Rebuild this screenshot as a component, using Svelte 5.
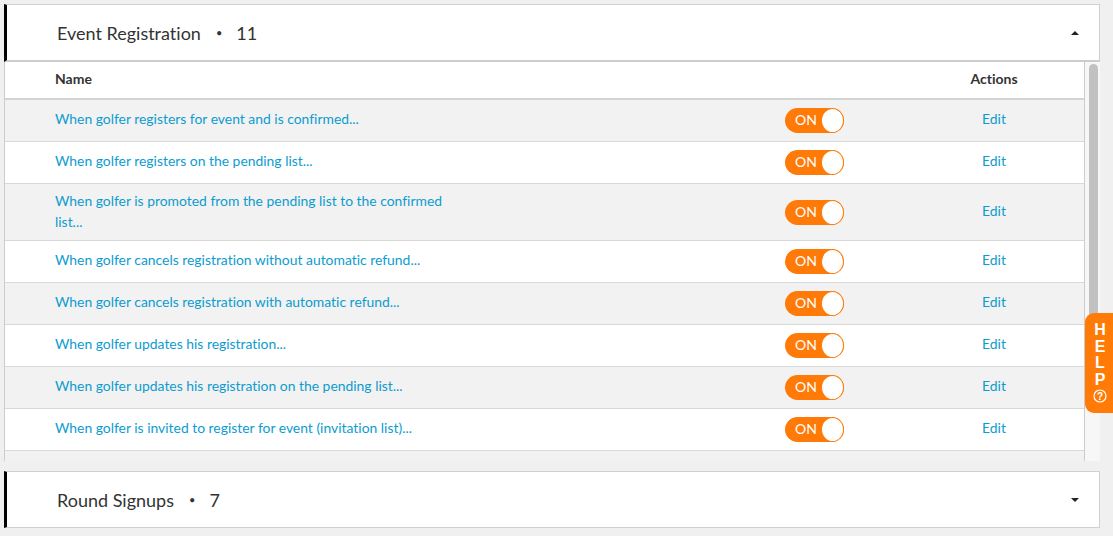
<script>
  const rows = [
    { text: 'When golfer registers for event and is confirmed...' },
    { text: 'When golfer registers on the pending list...' },
    { text: 'When golfer is promoted from the pending list to the confirmed list...', tall: true },
    { text: 'When golfer cancels registration without automatic refund...' },
    { text: 'When golfer cancels registration with automatic refund...' },
    { text: 'When golfer updates his registration...' },
    { text: 'When golfer updates his registration on the pending list...' },
    { text: 'When golfer is invited to register for event (invitation list)...' }
  ];
</script>

<div class="page">
  <section class="panel open">
    <header class="head">
      <span class="title">Event Registration</span>
      <span class="dot">•</span>
      <span class="count">11</span>
      <span class="caret up"></span>
    </header>
    <div class="scroller">
      <div class="tbl">
        <div class="row th">
          <div class="name">Name</div>
          <div></div>
          <div class="act">Actions</div>
        </div>
        {#each rows as r}
          <div class="row" class:tall={r.tall}>
            <div class="name"><a href="#top">{r.text}</a></div>
            <div class="toggle"><span class="on">ON</span><span class="knob"></span></div>
            <div class="act"><a href="#top">Edit</a></div>
          </div>
        {/each}
        <div class="filler"></div>
      </div>
      <div class="track"><div class="thumb"></div></div>
    </div>
  </section>

  <section class="panel closed">
    <header class="head">
      <span class="title">Round Signups</span>
      <span class="dot">•</span>
      <span class="count">7</span>
      <span class="caret down"></span>
    </header>
  </section>
</div>

<aside class="help">
  <span>H</span><span>E</span><span>L</span><span>P</span>
  <svg width="14" height="14" viewBox="0 0 14 14"><circle cx="7" cy="7" r="6" fill="none" stroke="#fff" stroke-width="1.2"/><text x="7" y="10.5" text-anchor="middle" font-size="10" font-weight="700" fill="#fff">?</text></svg>
</aside>

<style>
  :global(body) {
    margin: 0;
    background: #f0f0f0;
    overflow: hidden;
    font-family: Lato, "Liberation Sans", sans-serif;
    font-variant-ligatures: none;
    color: #333;
  }
  .page {
    padding: 4px 13px 0 4px;
  }
  .head {
    display: flex;
    align-items: center;
    height: 55px;
    background: #fff;
    border: 1px solid #d0d0d0;
    border-left: 3px solid #000;
    padding-left: 50px;
    padding-right: 20px;
    font-size: 18px;
    color: #333;
  }
  .open .head {
    border-bottom: 2px solid #ccc;
  }
  .dot {
    margin: 0 14px 0 15px;
    font-size: 11px;
  }
  .caret {
    margin-left: auto;
    width: 0;
    height: 0;
    border-left: 4.5px solid transparent;
    border-right: 4.5px solid transparent;
  }
  .caret.up { border-bottom: 4.5px solid #222; }
  .caret.down { border-top: 4.5px solid #222; }
  .scroller {
    display: flex;
    height: 399px;
    overflow: hidden;
  }
  .tbl {
    flex: 1;
    display: flex;
    flex-direction: column;
    border-left: 1px solid #ccc;
    border-right: 1px solid #ccc;
    background: #fff;
  }
  .track {
    flex: none;
    width: 15px;
    box-sizing: border-box;
    padding: 2px 2px 0 4px;
    background: #f7f7f7;
  }
  .thumb {
    height: 306px;
    border-radius: 5px;
    background: #c1c1c1;
  }
  .row {
    flex: none;
    display: grid;
    grid-template-columns: 780px 59px 1fr;
    align-items: center;
    min-height: 41px;
    border-bottom: 1px solid #d8d8d8;
    font-size: 13.9px;
    line-height: 21px;
  }
  .row:nth-child(even) {
    background: #f2f2f2;
  }
  .row.th {
    min-height: 36px;
    border-bottom: 2px solid #d4d4d4;
    background: #fff;
    font-weight: 700;
    font-size: 14px;
    color: #333;
  }
  .filler {
    flex: 1;
    background: #f2f2f2;
  }
  .name {
    padding: 5px 320px 9px 50px;
  }
  .tall .name {
    padding-top: 6px;
    padding-bottom: 8px;
  }
  .th .name {
    padding-top: 0;
    padding-bottom: 4px;
  }
  .act {
    padding: 0 0 4px 60px;
    text-align: center;
  }
  a {
    color: #0c9ccf;
    text-decoration: none;
  }
  .toggle {
    display: flex;
    align-items: center;
    justify-content: space-between;
    box-sizing: border-box;
    width: 59px;
    height: 25px;
    border-radius: 13px;
    background: #ff7a07;
    padding-left: 10px;
  }
  .on {
    color: #fff;
    font-size: 14px;
    line-height: 1;
    padding-bottom: 1px;
  }
  .knob {
    box-sizing: border-box;
    width: 23px;
    height: 25px;
    border-radius: 50%;
    background: #fff;
    border: 1px solid #ff7a07;
  }
  .closed {
    margin-top: 10px;
  }
  .help {
    position: fixed;
    left: 1085px;
    top: 313px;
    width: 28px;
    height: 100px;
    box-sizing: border-box;
    padding: 9px 0 0 2px;
    display: flex;
    flex-direction: column;
    align-items: center;
    background: #ff7a07;
    border-radius: 9px 0 0 9px;
    color: #fff;
    font-family: "Liberation Sans", sans-serif;
    font-weight: 700;
    font-size: 16px;
    line-height: 16.5px;
  }
  .help svg {
    margin-top: 1px;
  }
</style>
